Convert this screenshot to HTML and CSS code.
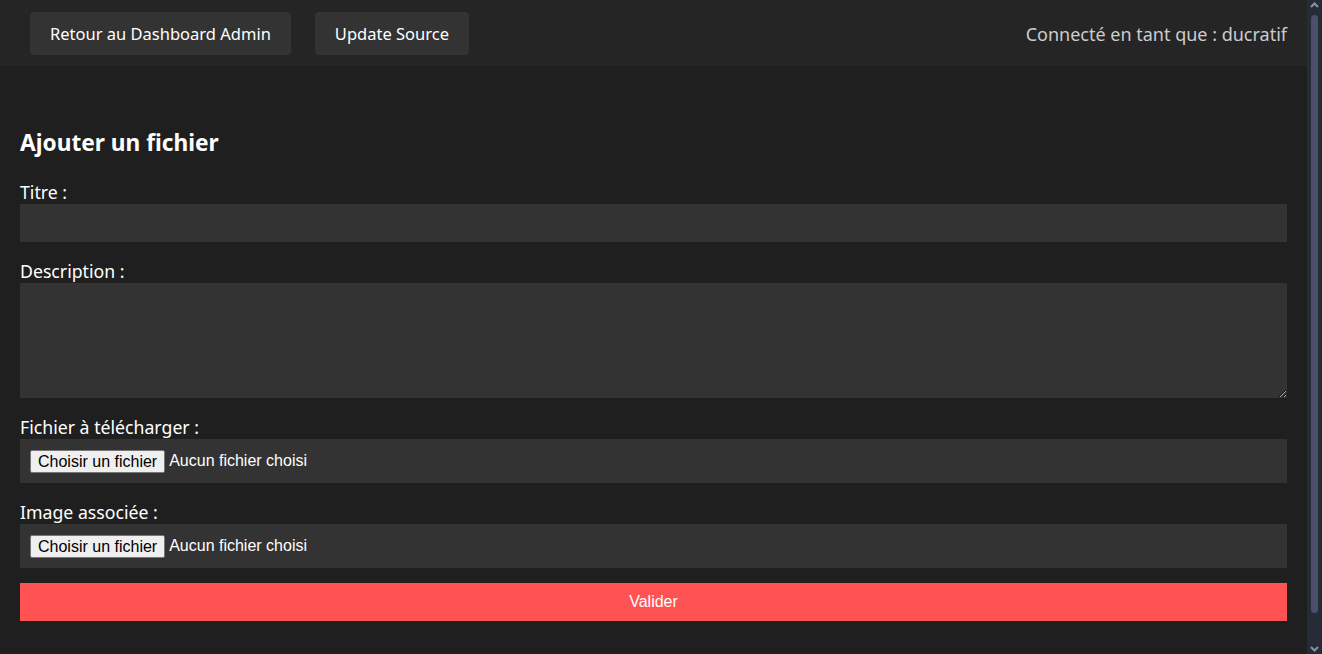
FILE: index.html
```html
<!DOCTYPE html>
<html lang="fr">
<head>
<meta charset="utf-8">
<title>Ajouter un fichier</title>
<link rel="stylesheet" href="styles.css">
</head>
<body>
<header class="topbar">
  <nav class="nav">
    <a class="nav-btn" href="#">Retour au Dashboard Admin</a>
    <a class="nav-btn" href="#">Update Source</a>
  </nav>
  <div class="user">Connecté en tant que : ducratif</div>
</header>
<main class="main">
  <h2 class="title">Ajouter un fichier</h2>
  <form class="form">
    <label class="label" for="titre">Titre :</label>
    <input class="field" id="titre" type="text">
    <label class="label" for="desc">Description :</label>
    <textarea class="field area" id="desc"></textarea>
    <label class="label">Fichier à télécharger :</label>
    <div class="field filebox"><span class="file-btn">Choisir un fichier</span><span class="file-txt">Aucun fichier choisi</span></div>
    <label class="label">Image associée :</label>
    <div class="field filebox"><span class="file-btn">Choisir un fichier</span><span class="file-txt">Aucun fichier choisi</span></div>
    <button class="submit" type="button">Valider</button>
  </form>
</main>
<div class="scrollbar" aria-hidden="true">
  <svg class="sb-arrow" width="15" height="11" viewBox="0 0 15 11"><path d="M4 7 L7.5 3.5 L11 7" fill="none" stroke="#8d91a6" stroke-width="2"/></svg>
  <div class="sb-track"><div class="sb-thumb"></div></div>
  <svg class="sb-arrow" width="15" height="11" viewBox="0 0 15 11"><path d="M4 4 L7.5 7.5 L11 4" fill="none" stroke="#8d91a6" stroke-width="2"/></svg>
</div>
</body>
</html>
```
FILE: styles.css
```css
html {
  background: #1f1f1f;
}
body {
  margin: 0 15px 0 0;
  background: #1f1f1f;
  color: #fff;
  font-family: "Noto Sans", "Open Sans", sans-serif;
}
.topbar {
  background: #252525;
  display: flex;
  align-items: center;
  justify-content: space-between;
  padding: 12px 20px 11px 30px;
}
.nav {
  display: flex;
  gap: 24px;
}
.nav-btn {
  display: block;
  background: #333;
  color: #fff;
  text-decoration: none;
  font-size: 16.5px;
  line-height: 44px;
  height: 43px;
  padding: 0 20px;
  border-radius: 4px;
}
.user {
  color: #ccc;
  font-size: 18px;
}
.main {
  padding: 60px 20px 40px;
}
.title {
  margin: 0 0 20px;
  font-size: 22.7px;
  line-height: 34px;
  font-weight: 700;
}
.form {
  display: flex;
  flex-direction: column;
}
.label {
  display: block;
  font-size: 17.7px;
  line-height: 24px;
  margin-top: 2px;
}
.label:first-child { margin-top: 0; }
.field {
  box-sizing: border-box;
  width: 100%;
  background: #333;
  border: none;
  color: #fff;
  margin: 0 0 15px;
  font: inherit;
}
input.field { height: 38px; padding: 0 10px; }
.area { height: 115px; resize: vertical; display: block; padding: 10px; }
.filebox {
  height: 44px;
  display: flex;
  align-items: center;
  padding: 0 10px;
  font-family: "Liberation Sans", Arial, sans-serif;
  font-size: 16px;
}
.file-btn {
  background: #efefef;
  color: #000;
  border: 1px solid #767676;
  border-radius: 2px;
  height: 23px;
  box-sizing: border-box;
  line-height: 21px;
  padding: 0 7px;
  margin-right: 4px;
}
.file-txt { color: #fff; }
.submit {
  height: 38px;
  background: #ff5252;
  color: #fff;
  border: none;
  font-family: "Liberation Sans", Arial, sans-serif;
  font-size: 16px;
  width: 100%;
}
.scrollbar {
  position: fixed;
  top: 0;
  right: 0;
  bottom: 0;
  width: 15px;
  background: #272a37;
  display: flex;
  flex-direction: column;
}
.sb-arrow { display: block; flex: none; }
.sb-track {
  flex: 1;
  padding: 4px 4px 30px;
  display: flex;
}
.sb-thumb {
  flex: 1;
  background: #4b4f6a;
  border-radius: 4px;
}
```
